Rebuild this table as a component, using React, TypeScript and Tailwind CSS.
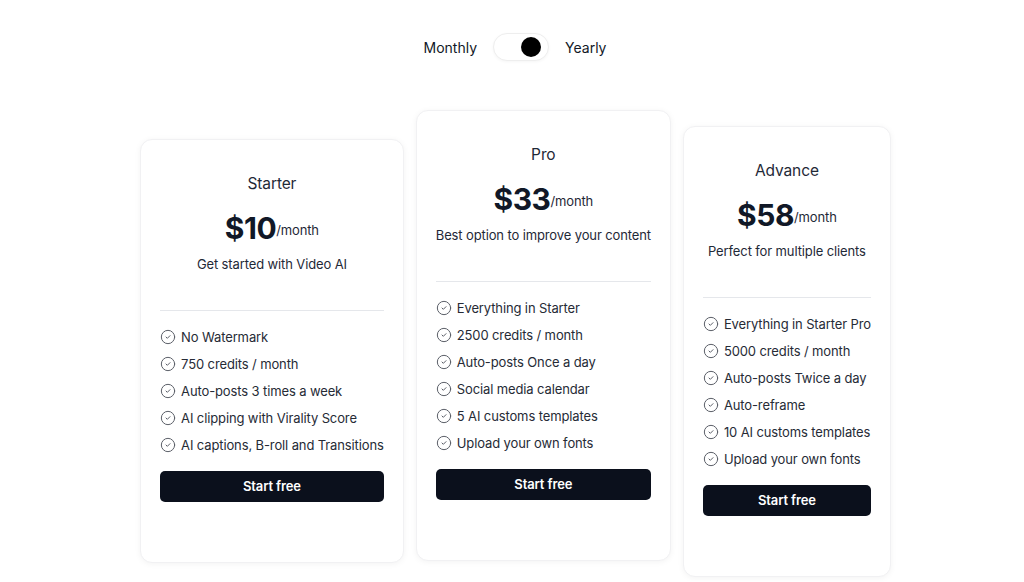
import { useState } from 'react';
import { CircleCheck } from 'lucide-react';

type Plan = {
  name: string;
  price: string;
  desc: string;
  features: string[];
  offset: string;
};

const plans: Plan[] = [
  {
    name: 'Starter',
    price: '$10',
    desc: 'Get started with Video AI',
    features: [
      'No Watermark',
      '750 credits / month',
      'Auto-posts 3 times a week',
      'AI clipping with Virality Score',
      'AI captions, B-roll and Transitions',
    ],
    offset: 'mt-[29px]',
  },
  {
    name: 'Pro',
    price: '$33',
    desc: 'Best option to improve your content',
    features: [
      'Everything in Starter',
      '2500 credits / month',
      'Auto-posts Once a day',
      'Social media calendar',
      '5 AI customs templates',
      'Upload your own fonts',
    ],
    offset: 'mt-0',
  },
  {
    name: 'Advance',
    price: '$58',
    desc: 'Perfect for multiple clients',
    features: [
      'Everything in Starter Pro',
      '5000 credits / month',
      'Auto-posts Twice a day',
      'Auto-reframe',
      '10 AI customs templates',
      'Upload your own fonts',
    ],
    offset: 'mt-4',
  },
];

function PlanCard({ plan }: { plan: Plan }) {
  return (
    <div
      className={`${plan.offset} bg-white border border-[#f1f1f3] rounded-xl shadow-[0_1px_6px_rgba(0,0,0,0.05)] px-[19px] pt-8 pb-[60px] flex flex-col tracking-[-0.12px]`}
    >
      <h3 className="text-center text-[15.5px] leading-6 text-[#1f2937]">{plan.name}</h3>
      <div className="mt-3.5 h-9 flex items-end justify-center">
        <span className="text-[30px] leading-9 font-bold text-[#111827] tracking-[-0.5px]">{plan.price}</span>
        <span className="text-[13px] leading-5 mb-1.5 text-[#1f2937]">/month</span>
      </div>
      <p className="mt-2 text-center text-[13px] leading-5 text-[#1f2937]">{plan.desc}</p>
      <div className="mt-9 border-t border-[#e5e7eb]" />
      <ul className="mt-4 flex flex-col gap-[7px]">
        {plan.features.map((f) => (
          <li key={f} className="flex items-center gap-[5px] text-[13px] leading-5 text-[#262b36] whitespace-nowrap">
            <CircleCheck size={16} strokeWidth={1.5} className="text-[#5b5f68] shrink-0" />
            <span>{f}</span>
          </li>
        ))}
      </ul>
      <button className="mt-4 h-[31px] rounded-[5px] bg-[#0b101c] text-white text-[13px] font-semibold">
        Start free
      </button>
    </div>
  );
}

export default function App() {
  const [yearly, setYearly] = useState(true);

  return (
    <div className="min-h-screen bg-white font-['Inter','Noto_Sans',sans-serif] pt-[33px]">
      {/* Billing toggle */}
      <div className="flex items-center justify-center gap-4 pl-[6px]">
        <span className="text-[14px] text-[#111827]">Monthly</span>
        <button
          onClick={() => setYearly(!yearly)}
          className={`w-14 h-7 rounded-full bg-white border border-[#eeeeee] shadow-[0_1px_3px_rgba(0,0,0,0.04)] flex items-center px-[7px] ${yearly ? 'justify-end' : 'justify-start'}`}
        >
          <span className="w-5 h-5 rounded-full bg-black" />
        </button>
        <span className="text-[14px] text-[#111827]">Yearly</span>
      </div>

      {/* Plans */}
      <div className="mt-[49px] flex items-start justify-center gap-3 pl-[7px]">
        {plans.map((p) => (
          <PlanCard key={p.name} plan={p} />
        ))}
      </div>
    </div>
  );
}
